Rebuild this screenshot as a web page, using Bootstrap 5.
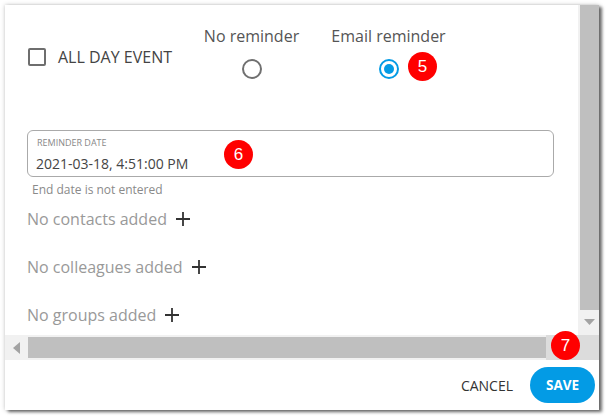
<!DOCTYPE html>
<html lang="en">
<head>
<meta charset="utf-8">
<title>Reminder</title>
<link rel="stylesheet" href="https://cdn.jsdelivr.net/npm/bootstrap@5.3.0/dist/css/bootstrap.min.css">
<style>
html,body{height:100%;overflow:hidden;background:#fff;}
body{font-family:"Open Sans","Noto Sans",sans-serif;color:#444;}
.dlg{position:absolute;left:5px;top:5px;width:594px;height:405px;background:#fff;box-shadow:3px 2px 3px rgba(0,0,0,.55),0 0 4px rgba(0,0,0,.25);display:flex;flex-direction:column;}
.scrollrow{height:330px;display:flex;flex:none;}
.pane{flex:1;min-width:0;padding:0 0 0 22px;position:relative;}
.vbar{width:21px;background:#f1f1f1;display:flex;flex-direction:column;padding-left:2px;}
.vthumb{flex:1;background:#bfbfbf;}
.vend{height:25px;display:flex;align-items:flex-start;justify-content:center;padding-top:9px;}
.hbar{height:25px;flex:none;display:flex;background:#f1f1f1;}
.hend{width:23px;display:flex;align-items:center;justify-content:center;}
.hthumb{width:518px;height:21px;margin-top:2px;background:#bfbfbf;}
.hcorner{flex:1;background:#dcdcdc;}
.topline{height:93px;display:flex;}
.alld{display:flex;align-items:center;gap:12px;width:177px;padding-top:10px;font-size:16px;color:#444;padding-left:1px;white-space:nowrap;}
.cbx{width:18px;height:18px;border:2px solid #6e6e6e;border-radius:2px;flex:none;}
.rcol{display:flex;flex-direction:column;align-items:center;font-size:16px;color:#555;padding-top:19px;line-height:24px;white-space:nowrap;flex:none;}
.rcol-a{width:95px;}
.rcol-b{width:115px;margin-left:32px;}
.rad{width:20px;height:20px;border-radius:50%;border:2px solid #707070;margin-top:11px;flex:none;}
.rad-on{border-color:#039be5;position:relative;}
.rad-on::after{content:"";position:absolute;inset:3px;border-radius:50%;background:#039be5;}
.fld{margin-top:32px;width:527px;height:47px;border:1px solid #aaa;border-radius:6px;padding:6px 8px;}
.fldcap{font-size:9px;color:#888;line-height:12px;padding-left:1px;}
.fldval{font-size:14px;color:#444;line-height:20px;margin-top:5px;}
.hint{font-size:12px;color:#8a8a8a;margin:5px 0 0 5px;line-height:16px;}
.addrow{display:flex;align-items:center;gap:8px;font-size:16px;color:#999;height:24px;margin-top:24px;}
.addrow-first{margin-top:9px;}
.pnum{position:absolute;width:29px;height:29px;border-radius:50%;background:#f00;color:#fff;font-family:"Liberation Sans",sans-serif;font-size:17px;display:flex;align-items:center;justify-content:center;line-height:1;}
.foot{flex:1;display:flex;align-items:center;justify-content:flex-end;padding-right:4px;gap:17px;position:relative;}
.cancelb{font-size:14px;font-weight:400;color:#333;padding:0;border:0;background:none;}
.saveb{width:65px;height:36px;border-radius:18px;background:#039be5;color:#fff;border:0;font-size:13.5px;font-weight:700;padding:0;}
</style>
</head>
<body>
<div class="dlg">
  <div class="scrollrow">
    <div class="pane">
      <div class="topline">
        <div class="alld"><span class="cbx"></span><span>ALL DAY EVENT</span></div>
        <div class="rcol rcol-a"><span>No reminder</span><span class="rad"></span></div>
        <div class="rcol rcol-b"><span>Email reminder</span><span class="rad rad-on"></span></div>
      </div>
      <div class="fld"><div class="fldcap">REMINDER DATE</div><div class="fldval">2021-03-18, 4:51:00 PM</div></div>
      <div class="hint">End date is not entered</div>
      <div class="addrow addrow-first"><span>No contacts added</span><svg width="16" height="16" viewBox="0 0 16 16"><path d="M1 8h14M8 1v14" stroke="#333" stroke-width="1.8"/></svg></div>
      <div class="addrow"><span>No colleagues added</span><svg width="16" height="16" viewBox="0 0 16 16"><path d="M1 8h14M8 1v14" stroke="#333" stroke-width="1.8"/></svg></div>
      <div class="addrow"><span>No groups added</span><svg width="16" height="16" viewBox="0 0 16 16"><path d="M1 8h14M8 1v14" stroke="#333" stroke-width="1.8"/></svg></div>
      <span class="pnum" style="left:403px;top:47px">5</span>
      <span class="pnum" style="left:219px;top:135px">6</span>
    </div>
    <div class="vbar"><div class="vthumb"></div><div class="vend"><svg width="11" height="6" viewBox="0 0 11 6"><path d="M0 0h11L5.5 6z" fill="#a3a3a3"/></svg></div></div>
  </div>
  <div class="hbar"><div class="hend"><svg width="7" height="12" viewBox="0 0 7 12"><path d="M7 0v12L0 6z" fill="#a3a3a3"/></svg></div><div class="hthumb"></div><div class="hcorner"></div></div>
  <div class="foot">
    <button class="cancelb" type="button">CANCEL</button>
    <button class="saveb" type="button">SAVE</button>
    <span class="pnum" style="left:546px;top:-29px">7</span>
  </div>
</div>
<script src="https://cdn.jsdelivr.net/npm/bootstrap@5.3.0/dist/js/bootstrap.bundle.min.js"></script>
</body>
</html>
